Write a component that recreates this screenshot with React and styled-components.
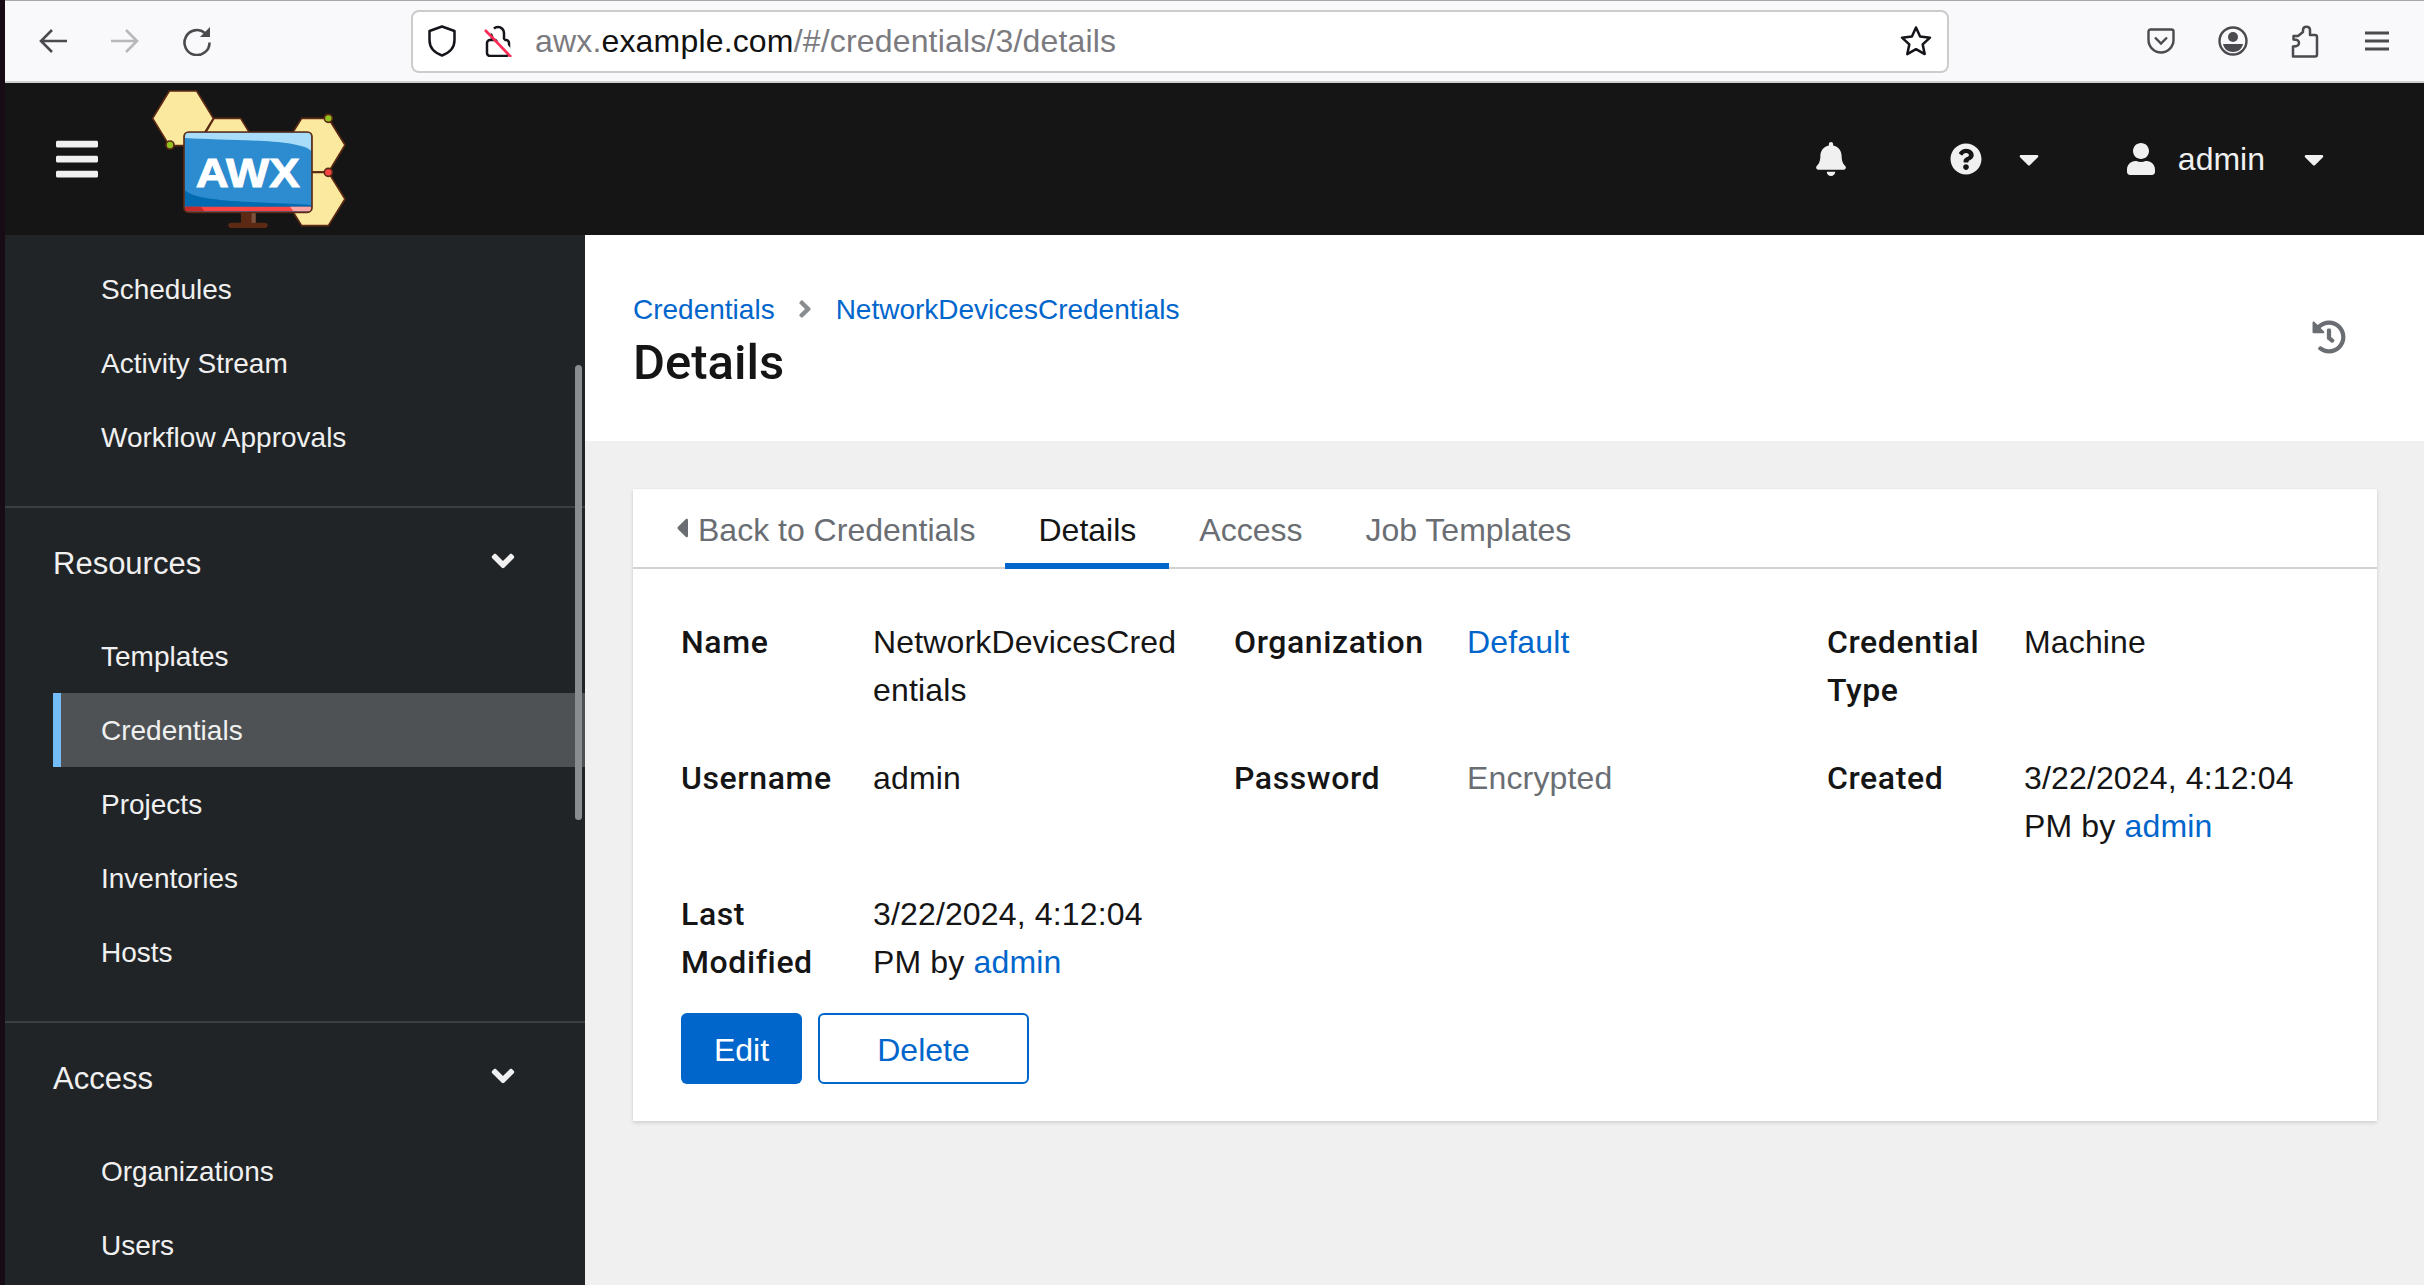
import React from "react";
import styled, { createGlobalStyle } from "styled-components";
import { FaBars, FaBell, FaQuestionCircle, FaCaretDown, FaUser, FaAngleDown, FaAngleRight, FaCaretLeft, FaHistory } from "react-icons/fa";

const Global = createGlobalStyle`
  html, body { margin: 0; padding: 0; height: 100%; overflow: hidden; background: #f0f0f0; }
  #root { height: 100%; }
  * { box-sizing: border-box; }
  body { font-family: "Liberation Sans", Arial, sans-serif; color: #151515; }
`;

const Screen = styled.div`display: flex; height: 1285px; width: 2424px; overflow: hidden;`;
const DesktopEdge = styled.div`width: 5px; flex: none; background: #170c16;`;
const Window = styled.div`flex: 1; display: flex; flex-direction: column; min-width: 0;`;

const BrowserBar = styled.div`
  height: 83px; flex: none; display: flex; align-items: center; padding-left: 12px;
  background: #f9f9fb; border-top: 1px solid #a8a8a8; border-bottom: 2px solid #cfcfd2;
`;
const ToolButton = styled.div`width: 72px; height: 40px; flex: none; display: flex; align-items: center; justify-content: center;`;
const UrlBar = styled.div`
  width: 1538px; height: 63px; margin: 0 176px 0 178px; flex: none; display: flex; align-items: center;
  padding: 0 15px 0 15px; background: #fff; border: 2px solid #cccccc; border-radius: 8px;
`;
const UrlIcon = styled.div`display: flex; flex: none; margin-right: ${p => p.$gap}px;`;
const UrlText = styled.div`flex: 1; font-size: 32px; letter-spacing: 0.17px; color: #7b7b7f; white-space: nowrap;`;
const UrlHost = styled.span`color: #111;`;

const Masthead = styled.header`
  height: 152px; flex: none; display: flex; align-items: center; padding-left: 51px; background: #151515; color: #f0f0f0;
`;
const Burger = styled.div`display: flex; width: 42px; margin-right: 32px; font-size: 48px;`;
const LogoArt = styled.svg`flex: none;`;
const MastheadTools = styled.div`margin-left: auto; display: flex; align-items: center; padding-right: 94px;`;
const MastIcon = styled.span`display: flex; align-items: center; flex: none; font-size: ${p => p.$size}px; margin-right: ${p => p.$gap || 0}px;`;
const UserName = styled.span`font-size: 32px; margin-right: 33px; color: #f0f0f0;`;

const Body = styled.div`flex: 1; display: flex; min-height: 0;`;
const Sidebar = styled.nav`
  width: 580px; flex: none; position: relative; overflow: hidden; background: #212427; padding-top: 17px; color: #f0f0f0;
`;
const Scrollbar = styled.div`position: absolute; right: 3px; top: 130px; width: 7px; height: 455px; background: #8a8d90; border-radius: 4px;`;
const NavItem = styled.div`
  height: 74px; display: flex; align-items: center; margin-left: 48px; padding: 2px 0 0 40px; font-size: 28px;
  border-left: 8px solid ${p => (p.$active ? "#73bcf7" : "transparent")};
  background: ${p => (p.$active ? "#4f5255" : "transparent")};
`;
const NavDivider = styled.div`height: 2px; background: #3c3f42; margin: 32px 0 0;`;
const NavGroup = styled.div`
  height: 111px; display: flex; align-items: center; justify-content: space-between; padding: 1px 64px 0 48px; font-size: 31px; color: #f0f0f0;
`;
const GroupChevron = styled.span`display: flex; font-size: 36px; margin-top: -7px;`;

const Main = styled.main`flex: 1; min-width: 0; display: flex; flex-direction: column;`;
const PageHeader = styled.section`
  height: 206px; flex: none; background: #fff; display: flex; justify-content: space-between; padding: 56px 78px 0 48px;
`;
const Breadcrumb = styled.div`display: flex; align-items: center; height: 36px; font-size: 28px; padding-top: 1px;`;
const Crumb = styled.a`color: #0066cc;`;
const CrumbSep = styled.span`display: flex; font-size: 28px; color: #8a8d90; margin: -2px 17px 0 16px;`;
const Title = styled.h1`margin: 7px 0 0; font-family: Roboto, "Liberation Sans", sans-serif; font-weight: 500; font-size: 49px; line-height: 58px; color: #151515;`;
const HistoryButton = styled.div`display: flex; font-size: 34px; color: #6a6e73; margin: 29px 0 0;`;

const Content = styled.div`flex: 1; padding: 48px 47px 0 48px;`;
const Card = styled.section`background: #fff; box-shadow: 0 2px 4px rgba(3,3,3,.12), 0 0 2px rgba(3,3,3,.06);`;
const Tabs = styled.div`height: 80px; display: flex; padding-left: 11px; border-bottom: 2px solid #d2d2d2; align-items: stretch;`;
const Tab = styled.div`
  display: flex; align-items: center; padding: 8px ${p => p.$right || 33}px 0 ${p => p.$left || 33}px; font-size: 32px; margin-bottom: -2px;
  color: ${p => (p.$active ? "#151515" : "#6a6e73")};
  border-bottom: 6px solid ${p => (p.$active ? "#0066cc" : "transparent")};
`;
const TabCaret = styled.span`display: flex; margin: -4px 0 0 0; font-size: 32px;`;
const CardBody = styled.div`padding: 49px 49px 37px 48px;`;
const DetailGrid = styled.dl`
  margin: 0; display: grid; grid-template-columns: 192px 361px 233px 360px 197px 1fr; row-gap: 40px; font-size: 32px; line-height: 48px;
`;
const Label = styled.dt`font-family: Roboto, "Liberation Sans", sans-serif; font-weight: 500; letter-spacing: .6px; color: #151515; padding-right: 10px;`;
const Value = styled.dd`margin: 0; max-width: ${p => p.$max || 314}px; letter-spacing: .15px; word-break: ${p => (p.$break ? "break-all" : "normal")}; color: ${p => (p.$muted ? "#6a6e73" : "#151515")};`;
const TextLink = styled.a`color: #0066cc;`;
const Actions = styled.div`display: flex; gap: 16px; margin-top: 27px;`;
const Button = styled.button`
  height: 71px; width: ${p => p.$width}px; font: 32px "Liberation Sans", sans-serif; border-radius: 6px; padding: 3px 0 0;
  color: ${p => (p.$primary ? "#fff" : "#0066cc")}; background: ${p => (p.$primary ? "#0066cc" : "#fff")};
  border: ${p => (p.$primary ? "none" : "2px solid #0066cc")};
`;

const Back = () => (
  <svg width="28" height="24" viewBox="0 0 28 24" fill="none" stroke="#4a4a4f" strokeWidth="2.6"><path d="M28 12H3M13 1 2 12l11 11" /></svg>
);
const Forward = () => (
  <svg width="28" height="24" viewBox="0 0 28 24" fill="none" stroke="#b8b8ba" strokeWidth="2.6"><path d="M0 12h25M15 1l11 11-11 11" /></svg>
);
const Reload = () => (
  <svg width="30" height="30" viewBox="0 0 30 30" fill="none"><path d="M23 7a12.5 12.5 0 1 0 4.5 9.5" stroke="#4a4a4f" strokeWidth="2.6" /><path d="M18 11h10V1z" fill="#4a4a4f" /></svg>
);
const Shield = () => (
  <svg width="28" height="32" viewBox="0 0 28 32" fill="none" stroke="#15141a" strokeWidth="2.5" strokeLinejoin="round"><path d="M14 1.5 26.5 6v9c0 8-5.500 13-12.500 15.500C7 28 1.500 23 1.500 15V6z" /></svg>
);
const LockOff = () => (
  <svg width="28" height="32" viewBox="0 0 28 32" fill="none"><path d="M8 15V8a6 6 0 0 1 12 0v7" stroke="#15141a" strokeWidth="2.5" /><rect x="3" y="15" width="22" height="16" rx="3" stroke="#15141a" strokeWidth="2.5" /><path d="M-1 1 26 33" stroke="#fff" strokeWidth="5" transform="translate(3 -3)" /><path d="M1 5 27 32" stroke="#ff2a55" strokeWidth="2.6" /></svg>
);
const Star = () => (
  <svg width="32" height="32" viewBox="0 0 32 32" fill="none" stroke="#15141a" strokeWidth="2.5" strokeLinejoin="round"><path d="M16 2.500l4.100 9 9.900 1.200-7.300 6.700 2 9.700-8.700-4.900-8.700 4.900 2-9.700L2 12.700l9.900-1.200z" /></svg>
);
const Pocket = () => (
  <svg width="28" height="26" viewBox="0 0 28 26" fill="none" stroke="#4a4a4f" strokeWidth="2.4"><path d="M3.500 1.500h21a2 2 0 0 1 2 2V12c0 7-6 12.500-12.500 12.500S1.500 19 1.500 12V3.500a2 2 0 0 1 2-2z" /><path d="m8 9.500 6 6 6-6" /></svg>
);
const Account = () => (
  <svg width="30" height="30" viewBox="0 0 30 30"><circle cx="15" cy="15" r="13.500" fill="none" stroke="#4a4a4f" strokeWidth="2.400" /><circle cx="15" cy="11" r="5" fill="#4a4a4f" /><path d="M5 18h20c-1 5-5 8-10 8s-9-3-10-8z" fill="#4a4a4f" /></svg>
);
const Puzzle = () => (
  <svg width="28" height="33" viewBox="0 0 28 33" fill="none" stroke="#4a4a4f" strokeWidth="2.500" strokeLinejoin="round"><path d="M2 31.500h22a2 2 0 0 0 2-2V12a2 2 0 0 0-2-2h-5V5c0-4.500-7-4.500-7 0v2L7 11H2.500v3.500c3.500 0 5.500 1.500 5.500 3.500s-2 3.500-6 3.500z" /></svg>
);
const Menu = () => (
  <svg width="24" height="20" viewBox="0 0 24 20" stroke="#4a4a4f" strokeWidth="3"><path d="M0 2h24M0 10h24M0 18h24" /></svg>
);

const Logo = () => (
  <LogoArt width="240" height="152" viewBox="0 39 720 456">
    <g fill="#fce9a0" stroke="#5c2a14" strokeWidth="5" strokeLinejoin="round">
      <path d="M68 145 118 63h82l50 82-50 82h-82z" />
      <path d="M205 225 252 145h80l50 82-50 82h-80z" />
      <path d="M465 225 515 145h80l50 80-50 82h-80z" />
      <path d="M465 387 515 307h80l50 80-50 80h-80z" />
    </g>
    <path d="M540 306h55" stroke="#5c2a14" strokeWidth="5" />
    <circle cx="120" cy="225" r="12" fill="#93c21f" stroke="#5c2a14" strokeWidth="5" />
    <circle cx="595" cy="145" r="12" fill="#93c21f" stroke="#5c2a14" strokeWidth="5" />
    <circle cx="595" cy="307" r="12" fill="#fb4444" stroke="#5c2a14" strokeWidth="5" />
    <rect x="333" y="426" width="44" height="36" fill="#5c2a14" />
    <rect x="365" y="428" width="12" height="32" fill="#7c5140" />
    <rect x="295" y="458" width="118" height="16" rx="8" fill="#5c2a14" />
    <rect x="162" y="186" width="384" height="241" rx="14" fill="#2d8ccf" />
    <path d="M165 204c120 8 340 2 378 38v-44a10 10 0 0 0-10-10H175a10 10 0 0 0-10 10z" fill="#a9dcf8" />
    <path d="M165 360c30 40 260 35 378 45v8H165z" fill="#006bb0" />
    <path d="M165 410h378v6a8 8 0 0 1-8 8H173a8 8 0 0 1-8-8z" fill="#fb4444" />
    <path d="M165 410h48l10 14h-50a8 8 0 0 1-8-8z" fill="#c42a2a" />
    <path d="M480 410h63v6a8 8 0 0 1-8 8h-45z" fill="#fca4a4" />
    <rect x="162" y="186" width="384" height="241" rx="14" fill="none" stroke="#5c2a14" strokeWidth="5" />
    <text x="353" y="350" textAnchor="middle" textLength="312" lengthAdjust="spacingAndGlyphs" fontFamily="Liberation Sans" fontWeight="700" fontSize="124" fill="#fff" stroke="#fff" strokeWidth="3">AWX</text>
  </LogoArt>
);

export default function App() {
  return (
    <Screen>
      <Global />
      <DesktopEdge />
      <Window>
        <BrowserBar>
          <ToolButton><Back /></ToolButton>
          <ToolButton><Forward /></ToolButton>
          <ToolButton><Reload /></ToolButton>
          <UrlBar>
            <UrlIcon $gap={28}><Shield /></UrlIcon>
            <UrlIcon $gap={23}><LockOff /></UrlIcon>
            <UrlText>awx.<UrlHost>example.com</UrlHost>/#/credentials/3/details</UrlText>
            <UrlIcon $gap={0}><Star /></UrlIcon>
          </UrlBar>
          <ToolButton><Pocket /></ToolButton>
          <ToolButton><Account /></ToolButton>
          <ToolButton><Puzzle /></ToolButton>
          <ToolButton><Menu /></ToolButton>
        </BrowserBar>
        <Masthead>
          <Burger><FaBars /></Burger>
          <Logo />
          <MastheadTools>
            <MastIcon $size={34} $gap={102}><FaBell /></MastIcon>
            <MastIcon $size={32} $gap={31}><FaQuestionCircle /></MastIcon>
            <MastIcon $size={32} $gap={80}><FaCaretDown /></MastIcon>
            <MastIcon $size={32} $gap={21}><FaUser /></MastIcon>
            <UserName>admin</UserName>
            <MastIcon $size={32}><FaCaretDown /></MastIcon>
          </MastheadTools>
        </Masthead>
        <Body>
          <Sidebar>
            <NavItem>Schedules</NavItem>
            <NavItem>Activity Stream</NavItem>
            <NavItem>Workflow Approvals</NavItem>
            <NavDivider />
            <NavGroup>Resources<GroupChevron><FaAngleDown /></GroupChevron></NavGroup>
            <NavItem>Templates</NavItem>
            <NavItem $active>Credentials</NavItem>
            <NavItem>Projects</NavItem>
            <NavItem>Inventories</NavItem>
            <NavItem>Hosts</NavItem>
            <NavDivider />
            <NavGroup>Access<GroupChevron><FaAngleDown /></GroupChevron></NavGroup>
            <NavItem>Organizations</NavItem>
            <NavItem>Users</NavItem>
            <Scrollbar />
          </Sidebar>
          <Main>
            <PageHeader>
              <div>
                <Breadcrumb>
                  <Crumb>Credentials</Crumb>
                  <CrumbSep><FaAngleRight /></CrumbSep>
                  <Crumb>NetworkDevicesCredentials</Crumb>
                </Breadcrumb>
                <Title>Details</Title>
              </div>
              <HistoryButton><FaHistory /></HistoryButton>
            </PageHeader>
            <Content>
              <Card>
                <Tabs>
                  <Tab $left={22} $right={30}><TabCaret><FaCaretLeft /></TabCaret>Back to Credentials</Tab>
                  <Tab $active>Details</Tab>
                  <Tab $left={30} $right={30}>Access</Tab>
                  <Tab>Job Templates</Tab>
                </Tabs>
                <CardBody>
                  <DetailGrid>
                    <Label>Name</Label>
                    <Value $break>NetworkDevicesCredentials</Value>
                    <Label>Organization</Label>
                    <Value><TextLink>Default</TextLink></Value>
                    <Label>Credential Type</Label>
                    <Value>Machine</Value>
                    <Label>Username</Label>
                    <Value>admin</Value>
                    <Label>Password</Label>
                    <Value $muted>Encrypted</Value>
                    <Label>Created</Label>
                    <Value>3/22/2024, 4:12:04 PM by <TextLink>admin</TextLink></Value>
                    <Label>Last Modified</Label>
                    <Value>3/22/2024, 4:12:04 PM by <TextLink>admin</TextLink></Value>
                  </DetailGrid>
                  <Actions>
                    <Button $primary $width={121}>Edit</Button>
                    <Button $width={211}>Delete</Button>
                  </Actions>
                </CardBody>
              </Card>
            </Content>
          </Main>
        </Body>
      </Window>
    </Screen>
  );
}
